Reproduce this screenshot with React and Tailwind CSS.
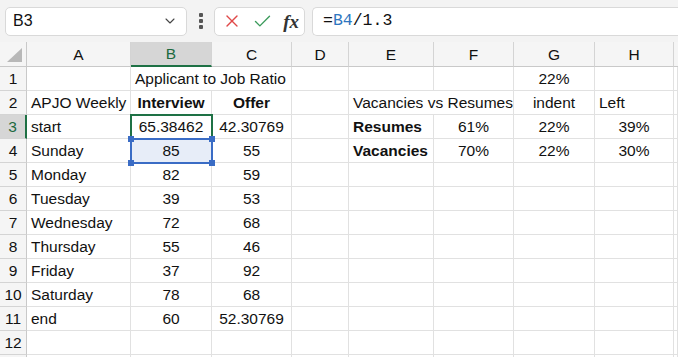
import { ChevronDown, X, Check } from 'lucide-react';

const cols = ['A', 'B', 'C', 'D', 'E', 'F', 'G', 'H'];

const rows = [
  { n: 1, cells: [{ c: 1, span: 2, t: 'Applicant to Job Ratio', a: 'left' }, { c: 6, t: '22%' }] },
  {
    n: 2,
    cells: [
      { c: 0, t: 'APJO Weekly', a: 'left' },
      { c: 1, t: 'Interview', b: true },
      { c: 2, t: 'Offer', b: true },
      { c: 4, span: 2, t: 'Vacancies vs Resumes', a: 'left' },
      { c: 6, t: 'indent' },
      { c: 7, t: 'Left', a: 'left' },
    ],
  },
  {
    n: 3,
    cells: [
      { c: 0, t: 'start', a: 'left' },
      { c: 1, t: '65.38462' },
      { c: 2, t: '42.30769' },
      { c: 4, t: 'Resumes', a: 'left', b: true },
      { c: 5, t: '61%' },
      { c: 6, t: '22%' },
      { c: 7, t: '39%' },
    ],
  },
  {
    n: 4,
    cells: [
      { c: 0, t: 'Sunday', a: 'left' },
      { c: 1, t: '85', ref: true },
      { c: 2, t: '55' },
      { c: 4, t: 'Vacancies', a: 'left', b: true },
      { c: 5, t: '70%' },
      { c: 6, t: '22%' },
      { c: 7, t: '30%' },
    ],
  },
  { n: 5, cells: [{ c: 0, t: 'Monday', a: 'left' }, { c: 1, t: '82' }, { c: 2, t: '59' }] },
  { n: 6, cells: [{ c: 0, t: 'Tuesday', a: 'left' }, { c: 1, t: '39' }, { c: 2, t: '53' }] },
  { n: 7, cells: [{ c: 0, t: 'Wednesday', a: 'left' }, { c: 1, t: '72' }, { c: 2, t: '68' }] },
  { n: 8, cells: [{ c: 0, t: 'Thursday', a: 'left' }, { c: 1, t: '55' }, { c: 2, t: '46' }] },
  { n: 9, cells: [{ c: 0, t: 'Friday', a: 'left' }, { c: 1, t: '37' }, { c: 2, t: '92' }] },
  { n: 10, cells: [{ c: 0, t: 'Saturday', a: 'left' }, { c: 1, t: '78' }, { c: 2, t: '68' }] },
  { n: 11, cells: [{ c: 0, t: 'end', a: 'left' }, { c: 1, t: '60' }, { c: 2, t: '52.30769' }] },
  { n: 12, cells: [] },
  // row 13 only peeks in at the bottom edge, no label visible
  { n: 13, cells: [], hidden: true },
];

const gridCols = 'grid grid-cols-[27px_104px_81px_80px_57px_85px_80px_81px_79px_1fr]';

function Row({ row }) {
  const out = [];
  let c = 0;
  while (c < 9) {
    const cell = row.cells.find((x) => x.c === c);
    const span = cell?.span || 1;
    const align = cell?.a === 'left' ? 'justify-start pl-[4px]' : 'justify-center';
    out.push(
      <div
        key={c}
        className={`relative h-[24px] flex items-center border-r border-b border-[#e1e1e1] overflow-hidden whitespace-nowrap ${align} ${span === 2 ? 'col-span-2' : ''} ${cell?.b ? 'font-bold' : ''} ${cell?.ref ? 'bg-[#e7edf8]' : ''}`}
      >
        {cell?.t}
      </div>
    );
    c += span;
  }
  const active = row.n === 3;
  return (
    <>
      <div
        className={`h-[24px] flex items-center justify-center border-b border-[#d4d4d4] ${active ? 'bg-[#d6d6d6] text-[#1d6a3f] border-r-2 border-r-[#1e7145]' : 'bg-[#f5f5f5] border-r border-r-[#c9c9c9]'}`}
      >
        {row.hidden ? '' : row.n}
      </div>
      {out}
    </>
  );
}

export default function App() {
  return (
    <div className="w-[678px] h-[357px] overflow-hidden bg-white text-[15.5px] text-[#111] font-['Liberation_Sans',sans-serif] relative">
      {/* formula toolbar */}
      <div className="h-[42px] bg-[#f3f3f3] flex items-center">
        <div className="ml-[5px] w-[182px] h-[29px] bg-white border border-[#d9d9d9] rounded-[5px] flex items-center justify-between pl-[7px] pr-[8px] text-[16px]">
          <span>B3</span>
          <ChevronDown className="w-[16px] h-[16px] text-[#444]" strokeWidth={1.6} />
        </div>
        <div className="w-[27px] flex flex-col items-center gap-[2px]">
          <span className="w-[4px] h-[4px] bg-[#555] rounded-[1px]" />
          <span className="w-[4px] h-[4px] bg-[#555] rounded-[1px]" />
          <span className="w-[4px] h-[4px] bg-[#555] rounded-[1px]" />
        </div>
        <div className="w-[91px] h-[29px] bg-white border border-[#d9d9d9] rounded-[5px] flex items-center justify-between pl-[7px] pr-[5px]">
          <X className="w-[20px] h-[20px] text-[#e04848]" strokeWidth={1.6} />
          <Check className="w-[21px] h-[21px] text-[#3a9a5a]" strokeWidth={1.6} />
          <span className="font-['Liberation_Serif',serif] italic font-bold text-[19px] text-[#333] leading-none">fx</span>
        </div>
        <div className="ml-[7px] flex-1 h-[29px] bg-white border border-[#d9d9d9] border-r-0 rounded-l-[5px] flex items-center pl-[10px] font-['Liberation_Mono',monospace] text-[16.5px]">
          <span>=</span>
          <span className="text-[#2f76c0]">B4</span>
          <span>/1.3</span>
        </div>
      </div>

      {/* column headers */}
      <div className={`${gridCols} h-[25px] bg-[#f5f5f5]`}>
        <div className="relative border-r border-b border-[#c9c9c9]">
          <div className="absolute right-[4px] bottom-[4px] w-0 h-0 border-l-[15px] border-l-transparent border-b-[14px] border-b-[#b8b8b8]" />
        </div>
        {cols.map((c) => (
          <div
            key={c}
            className={`flex items-center justify-center border-r border-[#d4d4d4] ${c === 'B' ? 'bg-[#d6d6d6] text-[#1d6a3f] border-b-2 border-b-[#1e7145]' : 'border-b border-b-[#c9c9c9]'}`}
          >
            {c}
          </div>
        ))}
        <div className="border-b border-[#c9c9c9]" />
      </div>

      {/* cells */}
      <div className={`${gridCols} relative`}>
        {rows.map((r) => (
          <Row key={r.n} row={r} />
        ))}
        {/* active cell B3 */}
        <div className="absolute left-[130px] top-[47px] w-[83px] h-[26px] border-2 border-[#1e7145] pointer-events-none" />
        {/* referenced cell B4 */}
        <div className="absolute left-[130px] top-[71px] w-[83px] h-[26px] border-2 border-[#3a6cc5] pointer-events-none">
          <span className="absolute -left-[4px] -top-[4px] w-[6px] h-[6px] bg-[#3a6cc5]" />
          <span className="absolute -right-[4px] -top-[4px] w-[6px] h-[6px] bg-[#3a6cc5]" />
          <span className="absolute -left-[4px] -bottom-[4px] w-[6px] h-[6px] bg-[#3a6cc5]" />
          <span className="absolute -right-[4px] -bottom-[4px] w-[6px] h-[6px] bg-[#3a6cc5]" />
        </div>
      </div>
    </div>
  );
}
